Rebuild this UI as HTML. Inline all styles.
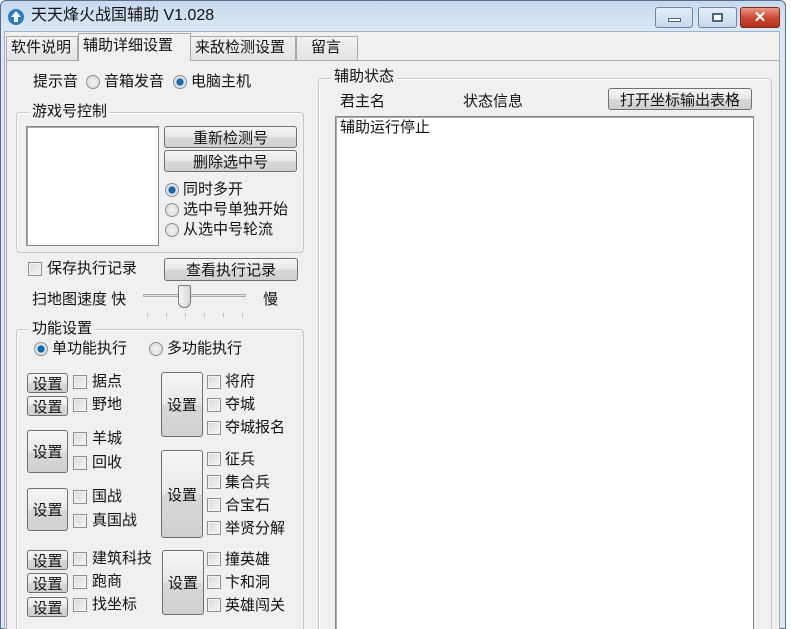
<!DOCTYPE html>
<html style="width:791px;height:629px;overflow:hidden"><head><meta charset="utf-8"><style>
*{margin:0;padding:0;box-sizing:border-box}
body{width:791px;height:629px;overflow:hidden;background:#fff;font-family:"Liberation Sans","Noto Sans CJK SC",sans-serif;font-size:15px;color:#111;position:relative}
.a{position:absolute;white-space:nowrap;line-height:18px}
.win{position:absolute;left:0;top:0;width:786px;height:629px;background:linear-gradient(#c6d9ee,#dce8f5 30px,#dce8f5);border:1px solid #5a6f86;border-radius:6px 6px 0 0}
.client{position:absolute;left:4px;top:31px;width:776px;height:598px;background:#f0f0f0;border:1px solid #9fb3c8}
.btn{position:absolute;border:1px solid #707070;border-radius:3px;background:linear-gradient(#f6f6f6,#e8e8e8 50%,#d8d8d8 51%,#d0d0d0);text-align:center;display:flex;align-items:center;justify-content:center;font-size:15px}
.grp{position:absolute;border:1px solid #c8c8c8;border-radius:4px;box-shadow:inset 1px 1px 0 #fff}
.gt{position:absolute;background:#f0f0f0;padding:0 3px;line-height:18px}
.cb{position:absolute;width:14px;height:14px;border:1px solid #8f8f8f;background:linear-gradient(135deg,#d8d8d8,#f6f6f6);box-shadow:inset 0 0 0 1px #f4f4f4}
.rd{position:absolute;width:14px;height:14px;border-radius:50%;border:1px solid #8f8f8f;background:radial-gradient(#f4f4f4,#d8d8d8)}
.rd.on{background:radial-gradient(circle,#1a7fc9 0,#0b5a98 3px,#cfe4f4 4px,#e8e8e8 7px)}
.tab{position:absolute;top:36px;height:24px;border:1px solid #aaa;border-bottom:none;background:linear-gradient(#f2f2f2,#e3e3e3);padding:1px 4px;line-height:20px}
</style></head><body>
<div class="win"></div>
<svg class="a" style="left:7px;top:8px" width="18" height="18" viewBox="0 0 18 18"><circle cx="9" cy="9" r="8" fill="#2a7cc7"/><path d="M9 3 L14 9 H11 V14 H7 V9 H4 Z" fill="#fff"/></svg>
<div class="a" style="left:31px;top:7px;font-size:16px">天天烽火战国辅助 V1.028</div>
<div class="a" style="left:655px;top:7px;width:38px;height:21px;border:1px solid #6d84a0;border-radius:3px;background:linear-gradient(#e6eef8,#c6d6ea)"><div style="position:absolute;left:12px;top:10px;width:13px;height:4px;background:#fff;border:1px solid #4d6480"></div></div>
<div class="a" style="left:698px;top:7px;width:39px;height:21px;border:1px solid #6d84a0;border-radius:3px;background:linear-gradient(#e6eef8,#c6d6ea)"><div style="position:absolute;left:13px;top:5px;width:11px;height:9px;background:#fff;border:2px solid #4d6480"></div></div>
<div class="a" style="left:740px;top:7px;width:40px;height:21px;border:1px solid #7a2a20;border-radius:3px;background:linear-gradient(#e99a88,#c9452f 55%,#b8301c);color:#fff;font-weight:bold;text-align:center;font-size:15px;line-height:19px">✕</div>
<div class="client"></div>
<div class="tab" style="left:6px;width:72px">软件说明</div>
<div class="tab" style="left:190px;width:106px">来敌检测设置</div>
<div class="tab" style="left:296px;width:62px;padding-left:14px">留言</div>
<div class="tab" style="left:78px;top:33px;height:28px;width:113px;background:#f0f0f0;z-index:2;padding-top:2px">辅助详细设置</div>
<div class="a" style="left:6px;top:60px;width:774px;height:569px;border:1px solid #aaa;border-bottom:none;background:#f0f0f0"></div>
<div class="a" style="left:33px;top:73px">提示音</div>
<div class="rd" style="left:86px;top:75px"></div>
<div class="a" style="left:104px;top:73px">音箱发音</div>
<div class="rd on" style="left:173px;top:75px"></div>
<div class="a" style="left:191px;top:73px">电脑主机</div>
<div class="grp" style="left:16px;top:112px;width:288px;height:141px"></div>
<div class="gt" style="left:29px;top:103px">游戏号控制</div>
<div class="a" style="left:26px;top:126px;width:133px;height:120px;background:#fff;border:1px solid #888;box-shadow:inset 1px 1px 0 #aaa"></div>
<div class="btn" style="left:164px;top:126px;width:133px;height:22px">重新检测号</div>
<div class="btn" style="left:164px;top:150px;width:133px;height:22px">删除选中号</div>
<div class="rd on" style="left:165px;top:183px"></div><div class="a" style="left:183px;top:181px">同时多开</div>
<div class="rd" style="left:165px;top:203px"></div><div class="a" style="left:183px;top:201px">选中号单独开始</div>
<div class="rd" style="left:165px;top:223px"></div><div class="a" style="left:183px;top:221px">从选中号轮流</div>
<div class="cb" style="left:28px;top:262px"></div><div class="a" style="left:47px;top:260px">保存执行记录</div>
<div class="btn" style="left:164px;top:258px;width:134px;height:23px">查看执行记录</div>
<div class="a" style="left:32px;top:291px">扫地图速度 快</div>
<div class="a" style="left:143px;top:294px;width:103px;height:3px;border:1px solid #aaa;background:#e4e4e4"></div>
<div class="a" style="left:178px;top:285px;width:13px;height:23px;border:1px solid #777;border-radius:2px 2px 6px 6px;background:linear-gradient(90deg,#f4f4f4,#d8d8d8)"></div>
<div class="a" style="left:147px;top:313px;width:100px;height:4px;background:repeating-linear-gradient(90deg,#bbb 0 1px,transparent 1px 19px)"></div>
<div class="a" style="left:263px;top:291px">慢</div>
<div class="grp" style="left:16px;top:329px;width:288px;height:310px"></div>
<div class="gt" style="left:29px;top:320px">功能设置</div>
<div class="rd on" style="left:34px;top:342px"></div><div class="a" style="left:52px;top:340px">单功能执行</div>
<div class="rd" style="left:149px;top:342px"></div><div class="a" style="left:167px;top:340px">多功能执行</div>
<div class="btn" style="left:27px;top:373px;width:41px;height:20px">设置</div>
<div class="btn" style="left:27px;top:396px;width:41px;height:20px">设置</div>
<div class="btn" style="left:27px;top:430px;width:41px;height:43px">设置</div>
<div class="btn" style="left:27px;top:488px;width:41px;height:43px">设置</div>
<div class="btn" style="left:27px;top:550px;width:41px;height:20px">设置</div>
<div class="btn" style="left:27px;top:573px;width:41px;height:20px">设置</div>
<div class="btn" style="left:27px;top:597px;width:41px;height:20px">设置</div>
<div class="cb" style="left:73px;top:375px"></div><div class="a" style="left:92px;top:373px">据点</div>
<div class="cb" style="left:73px;top:398px"></div><div class="a" style="left:92px;top:396px">野地</div>
<div class="cb" style="left:73px;top:432px"></div><div class="a" style="left:92px;top:430px">羊城</div>
<div class="cb" style="left:73px;top:456px"></div><div class="a" style="left:92px;top:454px">回收</div>
<div class="cb" style="left:73px;top:490px"></div><div class="a" style="left:92px;top:488px">国战</div>
<div class="cb" style="left:73px;top:514px"></div><div class="a" style="left:92px;top:512px">真国战</div>
<div class="cb" style="left:73px;top:552px"></div><div class="a" style="left:92px;top:550px">建筑科技</div>
<div class="cb" style="left:73px;top:575px"></div><div class="a" style="left:92px;top:573px">跑商</div>
<div class="cb" style="left:73px;top:598px"></div><div class="a" style="left:92px;top:596px">找坐标</div>
<div class="btn" style="left:161px;top:372px;width:42px;height:65px">设置</div>
<div class="btn" style="left:161px;top:450px;width:42px;height:88px">设置</div>
<div class="btn" style="left:162px;top:550px;width:42px;height:65px">设置</div>
<div class="cb" style="left:207px;top:375px"></div><div class="a" style="left:225px;top:373px">将府</div>
<div class="cb" style="left:207px;top:398px"></div><div class="a" style="left:225px;top:396px">夺城</div>
<div class="cb" style="left:207px;top:421px"></div><div class="a" style="left:225px;top:419px">夺城报名</div>
<div class="cb" style="left:207px;top:452px"></div><div class="a" style="left:225px;top:451px">征兵</div>
<div class="cb" style="left:207px;top:475px"></div><div class="a" style="left:225px;top:474px">集合兵</div>
<div class="cb" style="left:207px;top:498px"></div><div class="a" style="left:225px;top:497px">合宝石</div>
<div class="cb" style="left:207px;top:521px"></div><div class="a" style="left:225px;top:520px">举贤分解</div>
<div class="cb" style="left:207px;top:552px"></div><div class="a" style="left:225px;top:551px">撞英雄</div>
<div class="cb" style="left:207px;top:575px"></div><div class="a" style="left:225px;top:574px">卞和洞</div>
<div class="cb" style="left:207px;top:598px"></div><div class="a" style="left:225px;top:597px">英雄闯关</div>
<div class="grp" style="left:318px;top:78px;width:454px;height:570px"></div>
<div class="gt" style="left:331px;top:68px">辅助状态</div>
<div class="a" style="left:340px;top:93px">君主名</div>
<div class="a" style="left:463px;top:93px">状态信息</div>
<div class="btn" style="left:608px;top:88px;width:144px;height:22px">打开坐标输出表格</div>
<div class="a" style="left:335px;top:116px;width:419px;height:520px;background:#fff;border:1px solid #888;box-shadow:inset 1px 1px 0 #aaa"></div>
<div class="a" style="left:340px;top:119px">辅助运行停止</div>
</body></html>
